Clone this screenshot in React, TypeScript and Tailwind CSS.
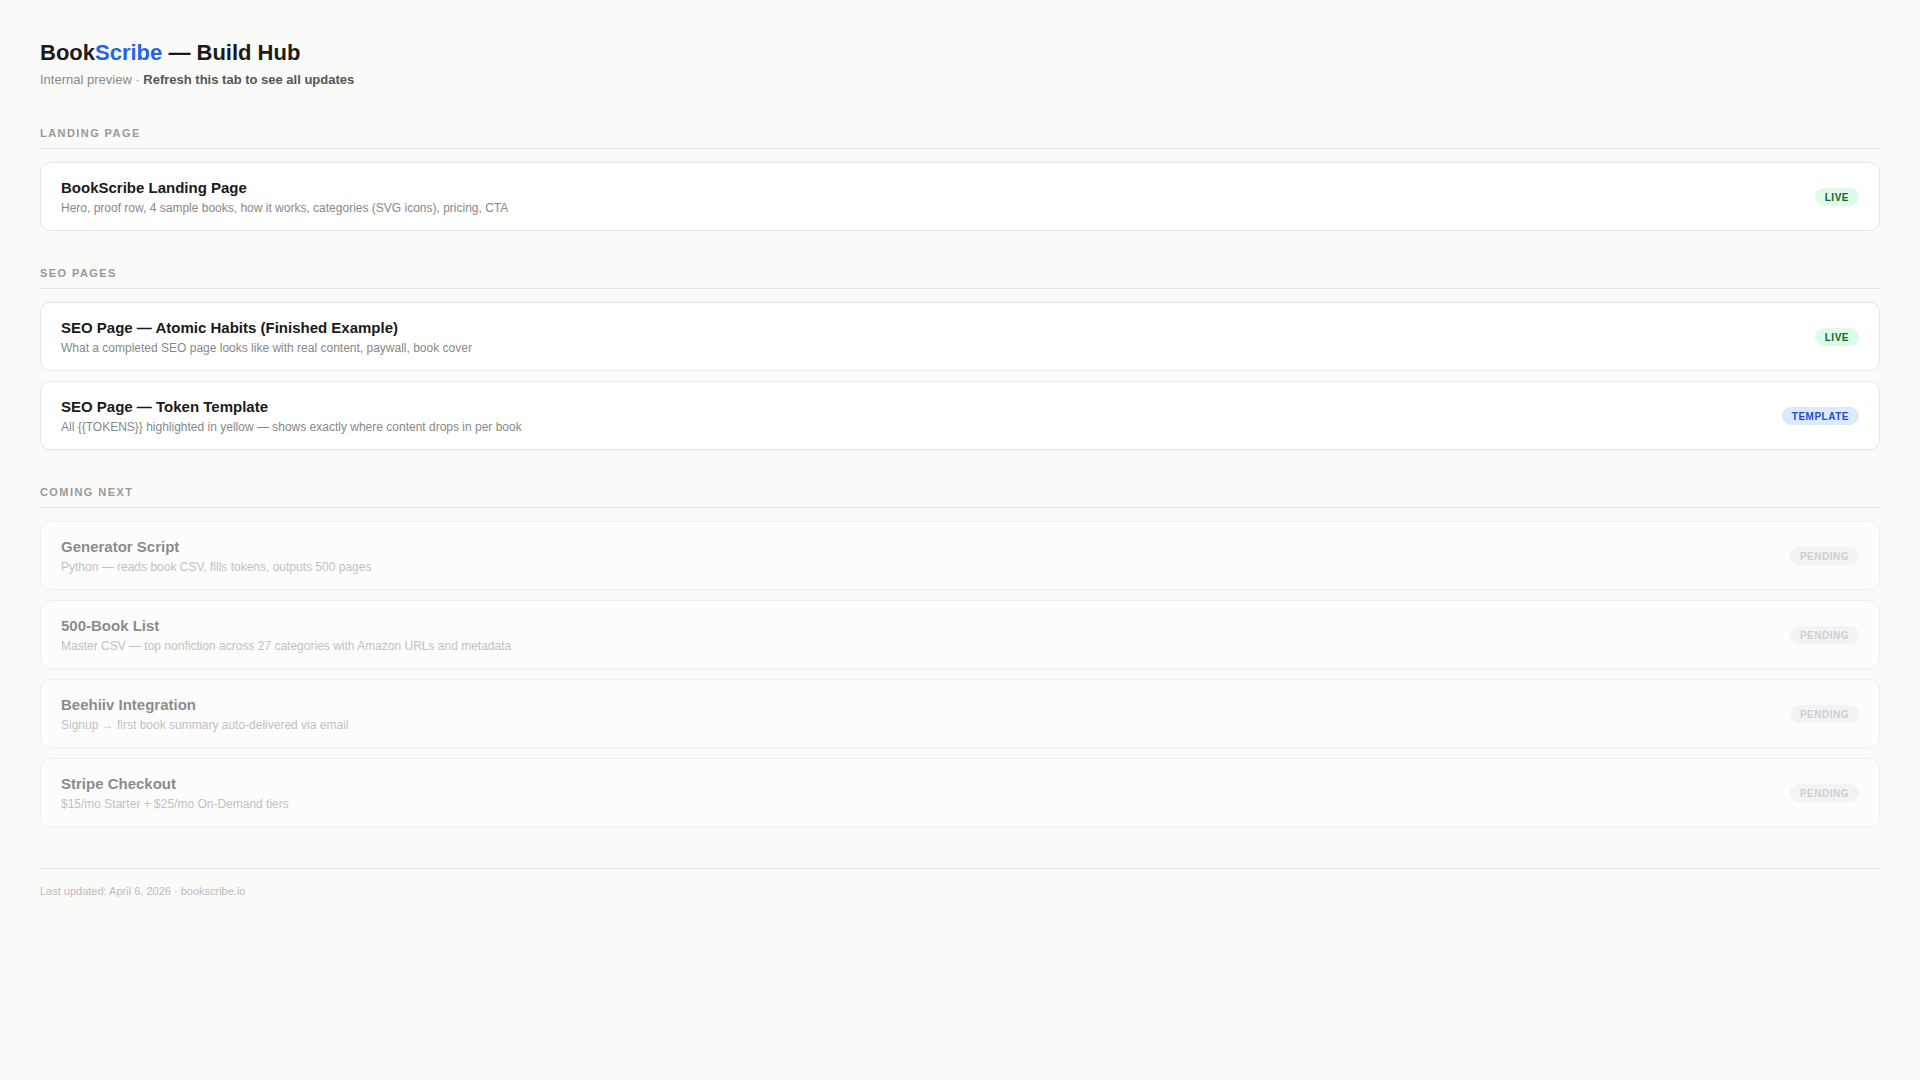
import React from "react";

type Status = "live" | "template" | "pending";

type Item = {
  title: string;
  desc: string;
  status: Status;
};

const sections: { label: string; items: Item[] }[] = [
  {
    label: "Landing Page",
    items: [
      {
        title: "BookScribe Landing Page",
        desc: "Hero, proof row, 4 sample books, how it works, categories (SVG icons), pricing, CTA",
        status: "live",
      },
    ],
  },
  {
    label: "SEO Pages",
    items: [
      {
        title: "SEO Page — Atomic Habits (Finished Example)",
        desc: "What a completed SEO page looks like with real content, paywall, book cover",
        status: "live",
      },
      {
        title: "SEO Page — Token Template",
        desc: "All {{TOKENS}} highlighted in yellow — shows exactly where content drops in per book",
        status: "template",
      },
    ],
  },
  {
    label: "Coming Next",
    items: [
      {
        title: "Generator Script",
        desc: "Python — reads book CSV, fills tokens, outputs 500 pages",
        status: "pending",
      },
      {
        title: "500-Book List",
        desc: "Master CSV — top nonfiction across 27 categories with Amazon URLs and metadata",
        status: "pending",
      },
      {
        title: "Beehiiv Integration",
        desc: "Signup → first book summary auto-delivered via email",
        status: "pending",
      },
      {
        title: "Stripe Checkout",
        desc: "$15/mo Starter + $25/mo On-Demand tiers",
        status: "pending",
      },
    ],
  },
];

function Badge({ status }: { status: Status }) {
  if (status === "live") {
    return (
      <span className="flex h-[18px] items-center rounded-full bg-[#dcfce7] px-[10px] text-[10px] font-bold tracking-[0.05em] text-[#166534]">
        LIVE
      </span>
    );
  }
  if (status === "template") {
    return (
      <span className="flex h-[18px] items-center rounded-full bg-[#dbeafe] px-[10px] text-[10px] font-bold tracking-[0.05em] text-[#1d4ed8]">
        TEMPLATE
      </span>
    );
  }
  return (
    <span className="flex h-[18px] items-center rounded-full bg-[#eceef1] px-[10px] text-[10px] font-bold tracking-[0.05em] text-[#9ca3af]">
      PENDING
    </span>
  );
}

function Card({ item }: { item: Item }) {
  const pending = item.status === "pending";
  return (
    <div
      className={`flex items-center justify-between rounded-[10px] border border-[#e5e5e3] bg-white px-5 pt-[15px] pb-[14px] ${
        pending ? "opacity-50" : ""
      }`}
    >
      <div>
        <div className="text-[15px] font-bold leading-[20px] text-[#1a1a1a]">{item.title}</div>
        <div className="mt-[2px] text-[12px] leading-[16px] text-[#888888]">{item.desc}</div>
      </div>
      <Badge status={item.status} />
    </div>
  );
}

export default function App() {
  return (
    <div className="min-h-screen bg-[#fafaf9] px-10 pt-[38px] pb-10 font-['Liberation_Sans',Arial,sans-serif]">
      <header>
        <h1 className="text-[22px] font-bold leading-[29px] text-[#1a1a1a]">
          Book<span className="text-[#2563eb]">Scribe</span> — Build Hub
        </h1>
        <p className="mt-[3px] text-[13px] leading-[20px] text-[#888888]">
          Internal preview · <span className="font-bold text-[#555555]">Refresh this tab to see all updates</span>
        </p>
      </header>

      {sections.map((section, i) => (
        <section key={section.label} className={i === 0 ? "mt-[35px]" : "mt-[34px]"}>
          <h2 className="border-b border-[#e5e5e3] pb-[7px] text-[11px] font-bold uppercase leading-[16px] tracking-[0.13em] text-[#999999]">
            {section.label}
          </h2>
          <div className="mt-[13px] flex flex-col gap-[10px]">
            {section.items.map((item) => (
              <Card key={item.title} item={item} />
            ))}
          </div>
        </section>
      ))}

      <footer className="mt-[41px] border-t border-[#e5e5e3] pt-[14px] text-[11px] leading-[16px] text-[#bbbbbb]">
        Last updated: April 6, 2026 · bookscribe.io
      </footer>
    </div>
  );
}
